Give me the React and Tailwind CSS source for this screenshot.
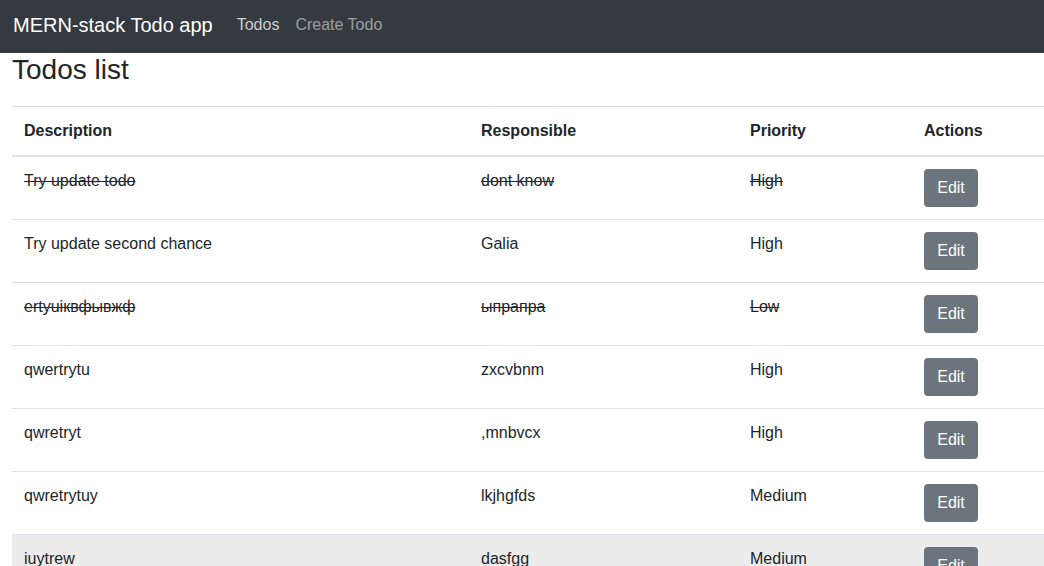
import React from "react";

const rows = [
  { d: "Try update todo", r: "dont know", p: "High", done: true },
  { d: "Try update second chance", r: "Galia", p: "High" },
  { d: "ertyuiквфывжф", r: "ыпрапра", p: "Low", done: true },
  { d: "qwertrytu", r: "zxcvbnm", p: "High" },
  { d: "qwretryt", r: ",mnbvcx", p: "High" },
  { d: "qwretrytuy", r: "lkjhgfds", p: "Medium" },
  { d: "iuytrew", r: "dasfgg", p: "Medium", hover: true },
];

export default function App() {
  return (
    <div
      className="w-[1044px] h-[566px] overflow-hidden bg-white text-[#212529] text-[16px] leading-[24px]"
      style={{ fontFamily: '"Liberation Sans", Arial, sans-serif' }}
    >
      <nav className="h-[53px] bg-[#343a40] flex items-center pl-[13px] pb-[4px]">
        <span className="text-[20px] text-white mr-[24px]">MERN-stack Todo app</span>
        <span className="text-[rgba(255,255,255,0.75)] mr-[16px]">Todos</span>
        <span className="text-[rgba(255,255,255,0.5)]">Create Todo</span>
      </nav>
      <div className="px-[12px]">
        <h3 className="text-[28px] leading-[34px] font-normal mt-0">Todos list</h3>
        <table className="w-[1110px] table-fixed border-collapse mt-[19px]">
          <colgroup>
            <col className="w-[457px]" />
            <col className="w-[269px]" />
            <col className="w-[174px]" />
            <col />
          </colgroup>
          <thead>
            <tr>
              <th className="text-left font-bold px-[12px] pt-[12px] pb-[12px] border-t border-[#dee2e6] border-b-2">Description</th>
              <th className="text-left font-bold px-[12px] pt-[12px] pb-[12px] border-t border-[#dee2e6] border-b-2">Responsible</th>
              <th className="text-left font-bold px-[12px] pt-[12px] pb-[12px] border-t border-[#dee2e6] border-b-2">Priority</th>
              <th className="text-left font-bold px-[12px] pt-[12px] pb-[12px] border-t border-[#dee2e6] border-b-2">Actions</th>
            </tr>
          </thead>
          <tbody>
            {rows.map((row, i) => (
              <tr key={i} className={row.hover ? "bg-[#ececec]" : ""}>
                <td className={"align-top p-[12px] border-t border-[#dee2e6] " + (row.done ? "line-through" : "")}>{row.d}</td>
                <td className={"align-top p-[12px] border-t border-[#dee2e6] " + (row.done ? "line-through" : "")}>{row.r}</td>
                <td className={"align-top p-[12px] border-t border-[#dee2e6] " + (row.done ? "line-through" : "")}>{row.p}</td>
                <td className="align-top p-[12px] border-t border-[#dee2e6]">
                  <button className="h-[38px] w-[54px] rounded-[4px] bg-[#6c757d] text-white text-[16px] leading-[24px]">
                    Edit
                  </button>
                </td>
              </tr>
            ))}
          </tbody>
        </table>
      </div>
    </div>
  );
}
